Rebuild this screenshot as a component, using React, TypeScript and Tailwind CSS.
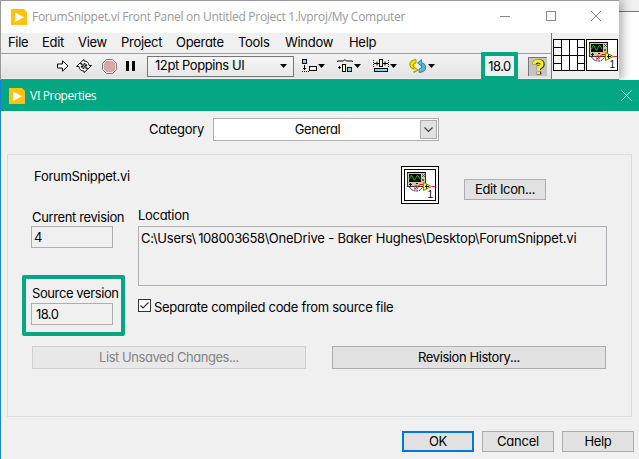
import React from "react";

const ui = "font-['Inter','Liberation_Sans',sans-serif] [font-feature-settings:'cv11','ss03'] tracking-[-0.37px]";

function Logo() {
  return (
    <svg width="16" height="16" viewBox="0 0 16 16" className="block shrink-0">
      <path d="M0 0H13L16 3V16H0Z" fill="#ffc20e" />
      <path d="M4 3.5L13 8.3L4 13Z" fill="#fff" />
    </svg>
  );
}

function ViIcon() {
  return (
    <svg width="32" height="32" viewBox="0 0 32 32" className="block shrink-0">
      <rect x=".5" y=".5" width="31" height="31" fill="#fff" stroke="#000" shapeRendering="crispEdges" />
      <g shapeRendering="crispEdges">
        <rect x="3.5" y="3.5" width="18" height="14" fill="#cccc99" stroke="#333" />
        <path d="M3 3H22V4H3Z" fill="#000" />
        <rect x="5" y="5" width="12" height="8" fill="#000" />
        <path d="M18 5h1v1h-1zM20 5h1v1h-1zM18 7h1v1h-1zM20 7h1v1h-1zM19 6h1v1h-1zM18 10h2v2h-2z" fill="#555" />
        <path d="M5 15h3v1H5zM6 14h1v3H6zM12 14h2v1h-2z" fill="#000080" />
      </g>
      <path d="M5.500 10.500L7 6.500H8L10 11H11L13 6.500H14L16 10.500" fill="none" stroke="#00b020" />
      <path d="M5.500 18Q8 22 12.500 22Q16 22 18.500 18.500" fill="none" stroke="#000090" strokeDasharray="2 .7" />
      <path d="M20 15.500H16L10.500 20.500M28 17.500H31" fill="none" stroke="#ff1515" />
      <circle cx="12" cy="18.500" r="1.800" fill="none" stroke="#ff1515" strokeWidth=".8" />
      <path d="M19.5 13.5V21.5L27.5 17.5Z" fill="#ffff18" stroke="#8a8a00" />
      <path d="M21 17.5H25M22.500 15.5V19.5" stroke="#000" />
      <text x="23.500" y="29" fontFamily="Liberation Sans, sans-serif" fontSize="10" fill="#000">1</text>
    </svg>
  );
}

function Caret() {
  return (
    <svg width="7" height="4" viewBox="0 0 7 4" className="block shrink-0">
      <path d="M0 0H7L3.5 4Z" fill="#000" />
    </svg>
  );
}

function ConnectorPane() {
  return (
    <svg width="32" height="32" viewBox="0 0 32 32" shapeRendering="crispEdges" className="block shrink-0">
      <rect x=".5" y=".5" width="31" height="31" fill="#fff" stroke="#000" />
      <path d="M8.5 0V32M16.5 0V32M24.5 0V32M0 16.5H32M0 8.5H8M0 24.5H8M24 8.5H32M24 24.5H32" stroke="#000" />
    </svg>
  );
}

function MenuItem({ className, children }: { className: string; children: string }) {
  return <span className={`shrink-0 whitespace-nowrap ${className}`}>{children}</span>;
}

function Button({ className, children }: { className: string; children: React.ReactNode }) {
  return (
    <button className={`flex shrink-0 items-center justify-center whitespace-nowrap ${className}`}>
      {children}
    </button>
  );
}

function Toolbar() {
  return (
    <div className="flex h-[25px] items-center border-t border-[#a0a0a0] bg-linear-to-b from-[#f4f4f4] to-[#e2e2e2]">
      <svg width="12" height="12" viewBox="0 0 12 12" className="ml-[56px] shrink-0">
        <path d="M.5 4H5.5V.8L11 6L5.5 11.2V8H.5Z" fill="#fff" stroke="#000" />
      </svg>
      <svg width="16" height="14" viewBox="0 0 16 14" className="ml-[7px] shrink-0">
        <path d="M.5 7.500L4 4L7 7.500H5Q6 9.500 8 9.500V7.500L11.500 10.500L8 13.500V12Q3.500 12 3 7.500Z" fill="#fff" stroke="#000" strokeWidth=".9" />
        <path d="M15.500 6.500L12 10L9 6.500H11Q10 4.500 8 4.500V6.500L4.500 3.500L8 .5V2Q12.500 2 13 6.500Z" fill="#fff" stroke="#000" strokeWidth=".9" />
      </svg>
      <svg width="15" height="15" viewBox="0 0 15 15" className="ml-[10px] shrink-0">
        <path d="M4.5 .5H10.500L14.500 4.5V10.500L10.500 14.500H4.500L.5 10.500V4.500Z" fill="#fff" stroke="#777" />
        <path d="M5 2H10L13 5V10L10 13H5L2 10V5Z" fill="#dda6a6" stroke="#c89090" strokeWidth=".5" />
      </svg>
      <svg width="10" height="10" viewBox="0 0 10 10" shapeRendering="crispEdges" className="ml-[9px] shrink-0">
        <path d="M0 0H3V10H0ZM6 0H9V10H6Z" fill="#000" />
      </svg>
      <div className="ml-[11px] flex h-[21px] w-[147px] shrink-0 items-center justify-between border border-[#767676] bg-linear-to-b from-[#f6f6f6] to-[#e8e8e8] pr-[6px] pl-[7px]">
        <span className="text-[13px] tracking-[-0.42px] whitespace-nowrap">12pt Poppins UI</span>
        <Caret />
      </div>
      <svg width="16" height="14" viewBox="0 0 16 14" shapeRendering="crispEdges" className="ml-[8px] shrink-0">
        <rect x=".5" y=".5" width="4" height="4" fill="#70dff5" stroke="#000" />
        <rect x="7.500" y="7.500" width="7" height="4" fill="#ffff9a" stroke="#000" />
        <path d="M2.500 6V11M1 9.500H4M0 12.500H1M2 12.500H3M4 12.500H5M6 12.500H7" stroke="#000" />
      </svg>
      <div className="mb-[1px]"><Caret /></div>
      <svg width="16" height="14" viewBox="0 0 16 14" className="ml-[12px] shrink-0">
        <path d="M.5 3V2H6.500L8 .5L9.500 2H15.500V3" fill="none" stroke="#000" />
        <path d="M1 8.500H4M2.500 7V10" stroke="#000" />
        <rect x="5.500" y="5.500" width="3" height="7" fill="#ffff9a" stroke="#000" />
        <rect x="10.500" y="8.500" width="4" height="4" fill="#70dff5" stroke="#000" />
      </svg>
      <div className="ml-px mb-[1px]"><Caret /></div>
      <svg width="17" height="14" viewBox="0 0 17 14" className="ml-[12px] shrink-0">
        <path d="M.5 1V8M15.500 1V8" stroke="#000" strokeDasharray="1 1" />
        <path d="M1 4.500H6M4 2.500V6.500M10 4.500H15M12 2.500V6.500" stroke="#000" />
        <rect x="6.500" y=".5" width="3" height="7" fill="#ffff9a" stroke="#000" />
        <rect x="1.500" y="9.500" width="13" height="3" fill="#70dff5" stroke="#000" />
      </svg>
      <div className="mb-[1px]"><Caret /></div>
      <svg width="18" height="14" viewBox="0 0 18 14" className="ml-[12px] shrink-0">
        <path d="M7 .5Q.5 1 .8 6Q1 9.500 5 10V8L9 11L5 13.500V12M7 .5V4Q3.500 4.500 4 7L5 8" fill="#f2e400" stroke="#8b8300" strokeWidth=".8" />
        <path d="M10 13.500Q17 13 16.800 8Q16.500 4.500 12.500 3.500V.5L8.500 4L12.500 7V5.500M10 13.500V10Q13.500 9.500 13 7" fill="#5ab5d5" stroke="#28758d" strokeWidth=".8" />
      </svg>
      <div className="ml-[1px] mb-[1px]"><Caret /></div>
    </div>
  );
}

function MainWindow() {
  return (
    <div className="relative z-10 h-[80px] w-[619px] shrink-0 border-t border-l border-[#999] bg-[#f0f0f0] shadow-[3px_0_10px_rgba(0,0,0,0.35)]">
      <div className="flex h-8 items-center bg-white pl-[10px]">
        <Logo />
        <span className="ml-[5px] w-[396px] whitespace-nowrap font-['Open_Sans','Noto_Sans',sans-serif] text-[12px] tracking-[-0.28px] text-[#999]">
          ForumSnippet.vi Front Panel on Untitled Project 1.lvproj/My Computer
        </span>
        <svg width="112" height="12" viewBox="0 0 112 12" className="ml-[72px] shrink-0" fill="none" stroke="#888">
          <path d="M0 5.500H10M46.500 .5H55.500V9.500H46.500Z" shapeRendering="crispEdges" />
          <path d="M91 0L101 10M101 0L91 10" />
        </svg>
      </div>
      <div className="flex h-[46px]">
        <div className="w-[550px] shrink-0">
          <div className="flex h-[20px] items-center pl-[7px] text-[13px] tracking-[-0.3px]">
            <MenuItem className="w-[34px]">File</MenuItem>
            <MenuItem className="w-[36px]">Edit</MenuItem>
            <MenuItem className="w-[43px]">View</MenuItem>
            <MenuItem className="w-[55px]">Project</MenuItem>
            <MenuItem className="w-[62px]">Operate</MenuItem>
            <MenuItem className="w-[47px]">Tools</MenuItem>
            <MenuItem className="w-[64px]">Window</MenuItem>
            <MenuItem className="w-[40px]">Help</MenuItem>
          </div>
          <Toolbar />
        </div>
        <div className="flex w-[68px] shrink-0 items-start border-l border-[#777] pt-[6px] pl-[1px]">
          <ConnectorPane />
          <div className="ml-[1px]"><ViIcon /></div>
        </div>
      </div>
      <div className="h-[1px] bg-[#777]" />
      <div className="absolute top-[51px] left-[480px] flex h-[28px] w-[37px] items-center justify-center rounded-[1px] border-4 border-[#05a783] bg-[#efefef] text-[13px] tracking-[-0.6px]">
        <span className="mt-px">18.0</span>
      </div>
      <div className="absolute top-[56px] left-[527px] flex h-[19px] w-[19px] items-center justify-center border-t border-l border-[#777] bg-[#c4c4c4]">
        <svg width="13" height="16" viewBox="0 0 13 16" fill="none">
          <path d="M2.500 5.500Q2.500 2.500 6.500 2.500Q10.500 2.500 10.500 5.500Q10.500 7.500 7 8.500V11M7 12.500V15.500" stroke="#333" strokeWidth="4.500" />
          <path d="M2 5.500Q2 2 6 2Q10 2 10 5Q10 7.500 6.500 8.500V11M6.500 12.500V15" stroke="#fff200" strokeWidth="3" />
        </svg>
      </div>
    </div>
  );
}

function Dialog() {
  return (
    <div className="relative z-20 h-[379px] border-l border-[#1883d7] bg-[#f0f0f0] text-[13px]">
      <div className="flex h-[31px] items-center bg-[#05a783] pr-[7px] pl-[8px] text-white">
        <Logo />
        <span className="ml-[5px] flex-1 whitespace-nowrap font-['Open_Sans','Noto_Sans',sans-serif] text-[12px] tracking-[-0.5px]">VI Properties</span>
        <svg width="11" height="11" viewBox="0 0 11 11" stroke="#fff">
          <path d="M.5 .5L10.500 10.500M10.500 .5L.5 10.500" />
        </svg>
      </div>
      <div className="mt-[7px] flex h-[23px] items-center pl-[148px]">
        <span className="w-[64px] tracking-[-0.3px] whitespace-nowrap">Category</span>
        <div className="flex h-[23px] w-[226px] items-center border border-[#adadb3] bg-white p-px">
          <span className="flex-1 text-center">General</span>
          <div className="flex h-[19px] w-[17px] items-center justify-center border border-[#adadad] bg-[#e1e1e1]">
            <svg width="9" height="6" viewBox="0 0 9 6" fill="none" stroke="#444" strokeWidth="1.200">
              <path d="M.5 .5L4.500 4.500L8.500 .5" />
            </svg>
          </div>
        </div>
      </div>
      <div className="mt-[13px] ml-[6px] h-[263px] w-[625px] border border-[#dcdcdc]">
        <div className="flex h-[49px] items-start pt-[11px] pl-[26px]">
          <span className="mt-[1px] w-[367px] tracking-[-0.28px] whitespace-nowrap">ForumSnippet.vi</span>
          <div className="border border-black bg-white p-[2px]"><ViIcon /></div>
          <Button className="mt-[13px] ml-[25px] h-[21px] w-[82px] border border-[#adadb3] bg-[#e1e1e1]">Edit Icon...</Button>
        </div>
        <div className="flex h-[120px] pl-[23px]">
          <div className="w-[107px] shrink-0">
            <div className="mt-[4px] h-[20px] pl-px whitespace-nowrap">Current revision</div>
            <div className="-mt-[2px] flex h-[22px] w-[82px] items-center border border-[#adadb3] pt-px pl-[2px]">4</div>
            <div className="mt-[27px] -ml-[9px] h-[61px] w-[103px] rounded-[2px] border-4 border-[#05a783] pt-[4px] pl-[5px]">
              <div className="h-[20px] pt-px pl-px tracking-[-0.4px] whitespace-nowrap">Source version</div>
              <div className="flex h-[22px] w-[82px] items-center border border-[#adadb3] pt-[2px] pl-[4px] tracking-[-0.6px]">18.0</div>
            </div>
          </div>
          <div className="w-[470px] shrink-0">
            <div className="mt-[2px] h-[20px] tracking-[-0.3px] whitespace-nowrap">Location</div>
            <div className="h-[60px] w-[469px] border border-[#adadb3] pt-[2px] pl-[2px] tracking-[-0.19px] whitespace-nowrap">
              C:\Users\<span className="ml-[2px] tracking-[-0.38px]">108003658</span>\OneDrive - Baker Hughes\Desktop\ForumSnippet.vi
            </div>
            <div className="mt-[11px] flex items-start">
              <svg width="13" height="13" viewBox="0 0 13 13" className="mt-[2px] shrink-0">
                <rect x=".5" y=".5" width="12" height="12" fill="#fff" stroke="#333" />
                <path d="M2.500 6.500L5 9L10.500 3.500" fill="none" stroke="#333" strokeWidth="1.200" />
              </svg>
              <span className="mt-px ml-[3px] tracking-[-0.3px] whitespace-nowrap">Separate compiled code from source file</span>
            </div>
          </div>
        </div>
        <div className="mt-[22px] flex gap-[26px] pl-[24px]">
          <Button className="h-[23px] w-[274px] border border-[#cfcfcf] bg-[#e8e8e8] tracking-[-0.45px] text-[#858585]">List Unsaved Changes...</Button>
          <Button className="h-[23px] w-[274px] border border-[#adadad] bg-[#e1e1e1] tracking-[-0.42px]">Revision History...</Button>
        </div>
      </div>
      <div className="mt-[14px] flex gap-[8px] pl-[401px]">
        <Button className="h-[21px] w-[72px] border-2 border-[#0078d7] bg-[#e1e1e1]">OK</Button>
        <Button className="h-[21px] w-[72px] border border-[#adadad] bg-[#e1e1e1] tracking-[-0.2px]">Cancel</Button>
        <Button className="h-[21px] w-[72px] border border-[#adadad] bg-[#e1e1e1]">Help</Button>
      </div>
    </div>
  );
}

export default function App() {
  return (
    <div className={`h-[459px] w-[639px] overflow-hidden bg-white text-black ${ui}`}>
      <div className="flex h-[80px]">
        <MainWindow />
        <div className="h-[12px] flex-1 border-b border-[#777] bg-[#f0f0f0]" />
      </div>
      <Dialog />
    </div>
  );
}
